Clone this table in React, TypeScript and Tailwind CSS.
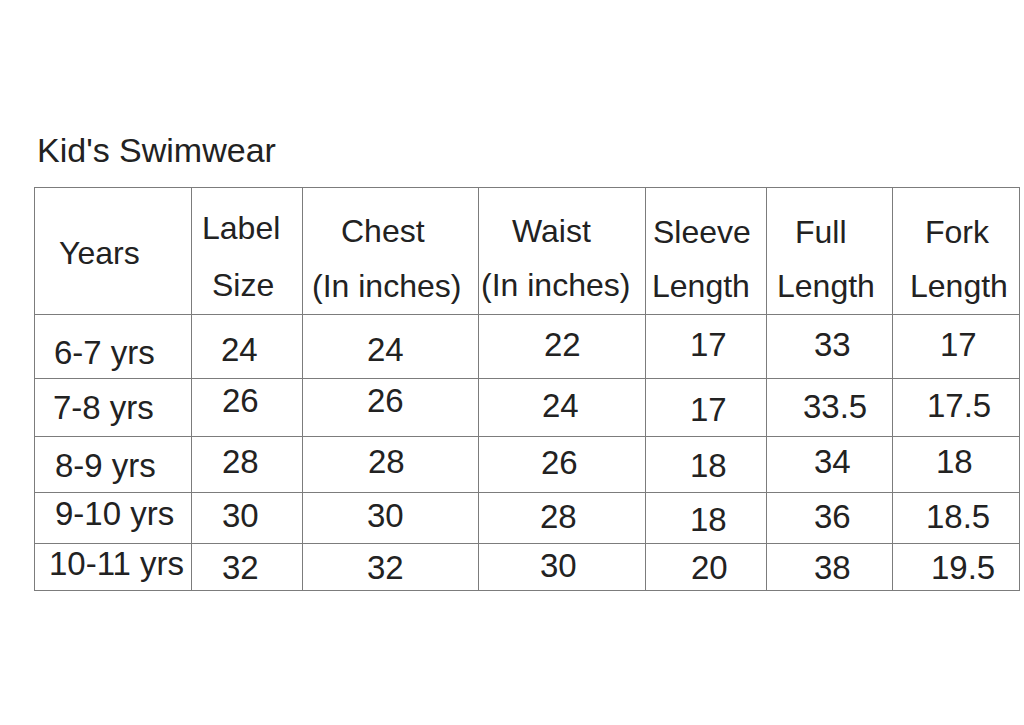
const font = { fontFamily: '"Liberation Sans", Arial, sans-serif' };

type Line = { text: string; cls: string };

// header cells: each line gets its own offset, the source artwork is hand-placed
const header: Line[][] = [
  [{ text: "Years", cls: "mt-[49px] pl-[24px]" }],
  [
    { text: "Label", cls: "mt-[24px] pl-[10px]" },
    { text: "Size", cls: "mt-[25px] pl-[20px]" },
  ],
  [
    { text: "Chest", cls: "mt-[27px] pl-[38px]" },
    { text: "(In inches)", cls: "mt-[23px] pl-[9px]" },
  ],
  [
    { text: "Waist", cls: "mt-[27px] pl-[33px]" },
    { text: "(In inches)", cls: "mt-[22px] pl-[2px]" },
  ],
  [
    { text: "Sleeve", cls: "mt-[28px] pl-[7px]" },
    { text: "Length", cls: "mt-[22px] pl-[6px]" },
  ],
  [
    { text: "Full", cls: "mt-[28px] pl-[28px]" },
    { text: "Length", cls: "mt-[22px] pl-[10px]" },
  ],
  [
    { text: "Fork", cls: "mt-[28px] pl-[32px]" },
    { text: "Length", cls: "mt-[22px] pl-[17px]" },
  ],
];

const rows: { h: string; cells: Line[] }[] = [
  {
    h: "h-[64px]",
    cells: [
      { text: "6-7 yrs", cls: "pl-[19px] pt-[21px]" },
      { text: "24", cls: "pl-[29px] pt-[18px]" },
      { text: "24", cls: "pl-[64px] pt-[18px]" },
      { text: "22", cls: "pl-[65px] pt-[13px]" },
      { text: "17", cls: "pl-[44px] pt-[13px]" },
      { text: "33", cls: "pl-[47px] pt-[13px]" },
      { text: "17", cls: "pl-[47px] pt-[13px]" },
    ],
  },
  {
    h: "h-[58px]",
    cells: [
      { text: "7-8 yrs", cls: "pl-[18px] pt-[12px]" },
      { text: "26", cls: "pl-[30px] pt-[5px]" },
      { text: "26", cls: "pl-[64px] pt-[5px]" },
      { text: "24", cls: "pl-[63px] pt-[10px]" },
      { text: "17", cls: "pl-[44px] pt-[14px]" },
      { text: "33.5", cls: "pl-[36px] pt-[11px]" },
      { text: "17.5", cls: "pl-[34px] pt-[10px]" },
    ],
  },
  {
    h: "h-[56px]",
    cells: [
      { text: "8-9 yrs", cls: "pl-[20px] pt-[12px]" },
      { text: "28", cls: "pl-[30px] pt-[8px]" },
      { text: "28", cls: "pl-[65px] pt-[8px]" },
      { text: "26", cls: "pl-[62px] pt-[9px]" },
      { text: "18", cls: "pl-[44px] pt-[12px]" },
      { text: "34", cls: "pl-[47px] pt-[8px]" },
      { text: "18", cls: "pl-[43px] pt-[8px]" },
    ],
  },
  {
    h: "h-[51px]",
    cells: [
      { text: "9-10 yrs", cls: "pl-[20px] pt-[4px]" },
      { text: "30", cls: "pl-[30px] pt-[6px]" },
      { text: "30", cls: "pl-[64px] pt-[6px]" },
      { text: "28", cls: "pl-[61px] pt-[7px]" },
      { text: "18", cls: "pl-[44px] pt-[10px]" },
      { text: "36", cls: "pl-[47px] pt-[7px]" },
      { text: "18.5", cls: "pl-[33px] pt-[7px]" },
    ],
  },
  {
    h: "h-[47px]",
    cells: [
      { text: "10-11 yrs", cls: "pl-[14px] pt-[3px]" },
      { text: "32", cls: "pl-[30px] pt-[7px]" },
      { text: "32", cls: "pl-[64px] pt-[7px]" },
      { text: "30", cls: "pl-[61px] pt-[5px]" },
      { text: "20", cls: "pl-[45px] pt-[7px]" },
      { text: "38", cls: "pl-[47px] pt-[7px]" },
      { text: "19.5", cls: "pl-[38px] pt-[7px]" },
    ],
  },
];

const cols = "grid grid-cols-[157px_111px_176px_167px_121px_126px_127px]";

export default function App() {
  return (
    <div className="w-[1024px] h-[725px] bg-white text-[#222222] overflow-hidden" style={font}>
      {/* Title */}
      <h1 className="pt-[133px] pl-[37px] text-[34px] leading-none font-normal whitespace-nowrap">
        Kid&#39;s Swimwear
      </h1>

      {/* Size table */}
      <div className="ml-[34px] mt-[20px] w-[986px] border-l border-t border-[#7c7c7c]">
        <div className={`${cols} h-[127px]`}>
          {header.map((lines, i) => (
            <div key={i} className="border-r border-b border-[#7c7c7c] text-[32px] leading-none whitespace-nowrap">
              {lines.map((l) => (
                <div key={l.text} className={l.cls}>
                  {l.text}
                </div>
              ))}
            </div>
          ))}
        </div>

        {rows.map((row, r) => (
          <div key={r} className={`${cols} ${row.h}`}>
            {row.cells.map((c, i) => (
              <div
                key={i}
                className={`border-r border-b border-[#7c7c7c] text-[33px] leading-none whitespace-nowrap ${c.cls}`}
              >
                {c.text}
              </div>
            ))}
          </div>
        ))}
      </div>
    </div>
  );
}
